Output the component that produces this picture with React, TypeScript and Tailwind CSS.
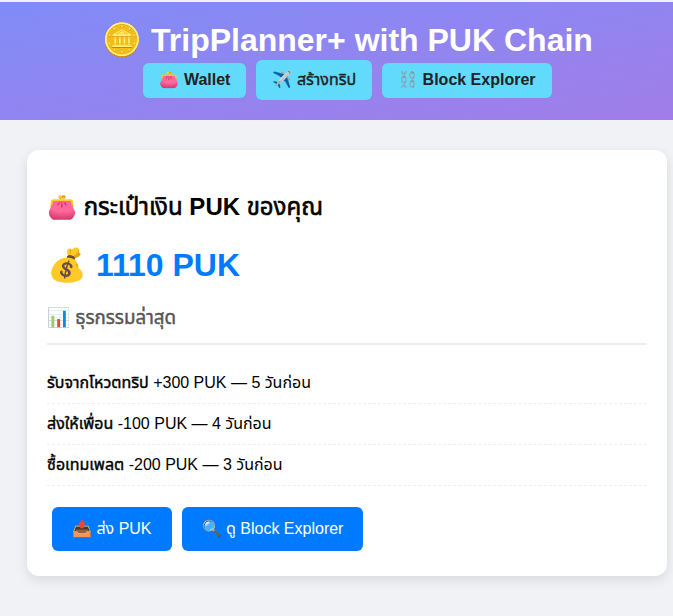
import React from 'react';

const txs = [
  { title: 'รับจากโหวตทริป', rest: ' +300 PUK — 5 วันก่อน' },
  { title: 'ส่งให้เพื่อน', rest: ' -100 PUK — 4 วันก่อน' },
  { title: 'ซื้อเทมเพลต', rest: ' -200 PUK — 3 วันก่อน' },
];

const font = "font-['Liberation_Sans','Noto_Sans_Thai',sans-serif]";

export default function App() {
  return (
    <div className={`min-h-[616px] bg-[#f0f2f5] pt-[2px] ${font}`}>
      <header className="h-[118px] pl-[22px] bg-gradient-to-br from-[#7f8cf8] to-[#a17de8] flex flex-col items-center">
        <h1 className="text-[32px] font-bold text-white leading-[37px] mt-[20px]">🪙 TripPlanner+ with PUK Chain</h1>
        <nav className="flex items-center gap-[10px] mt-[1px]">
          <a className="h-[35px] px-4 flex items-center rounded-md bg-[#61dafb] text-[#222] font-bold">👛 Wallet</a>
          <a className="h-[40px] px-4 flex items-center rounded-md bg-[#61dafb] text-[#222] whitespace-pre">✈️ <span className="[-webkit-text-stroke:0.4px]">สร้างทริป</span></a>
          <a className="h-[35px] px-4 flex items-center rounded-md bg-[#61dafb] text-[#222] font-bold">⛓️ Block Explorer</a>
        </nav>
      </header>
      <main className="px-[27px] pt-[30px]">
        <section className="w-[640px] h-[426px] bg-white rounded-xl shadow-[0_4px_12px_rgba(0,0,0,0.1)] px-5 pt-[40px]">
          <h2 className="text-2xl font-bold text-black leading-[34px]">
            👛 <span className="font-normal [-webkit-text-stroke:0.6px]">กระเป๋าเงิน</span> PUK <span className="font-normal [-webkit-text-stroke:0.6px]">ของคุณ</span>
          </h2>
          <div className="text-[32px] font-bold text-[#007bff] leading-[37px] mt-[23px]">💰 1110 PUK</div>
          <h3 className="text-[18.72px] text-[#555] leading-[26px] mt-[21px] pb-[12px] border-b-2 border-[#eee]">📊 <span className="[-webkit-text-stroke:0.45px]">ธุรกรรมล่าสุด</span></h3>
          <ul className="mt-[18px]">
            {txs.map(t => (
              <li key={t.title} className="h-[41px] flex items-center border-b border-dashed border-[#eee] text-black whitespace-pre">
                <strong className="font-normal [-webkit-text-stroke:0.4px]">{t.title}</strong>{t.rest}
              </li>
            ))}
          </ul>
          <div className="flex gap-[10px] mt-[21px] ml-[5px]">
            <button className="h-[44px] px-[20px] rounded-md bg-[#007bff] text-white">📤 ส่ง PUK</button>
            <button className="h-[44px] px-[20px] rounded-md bg-[#007bff] text-white">🔍 ดู Block Explorer</button>
          </div>
        </section>
      </main>
    </div>
  );
}
